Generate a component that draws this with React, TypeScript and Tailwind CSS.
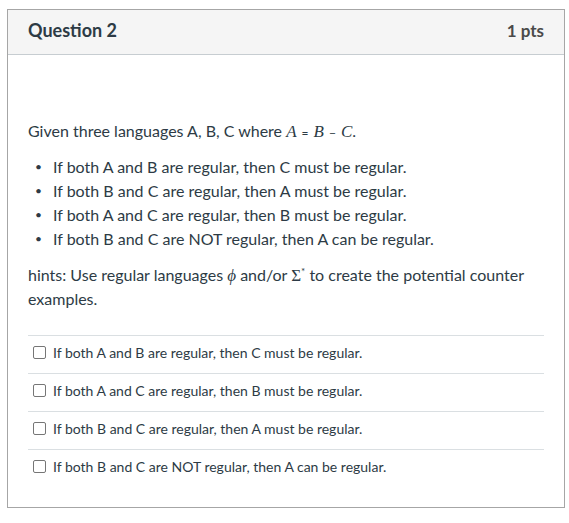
const BULLETS = [
  "If both A and B are regular, then C must be regular.",
  "If both B and C are regular, then A must be regular.",
  "If both A and C are regular, then B must be regular.",
  "If both B and C are NOT regular, then A can be regular.",
];

const ANSWERS = [
  "If both A and B are regular, then C must be regular.",
  "If both A and C are regular, then B must be regular.",
  "If both B and C are regular, then A must be regular.",
  "If both B and C are NOT regular, then A can be regular.",
];

const math = "font-['Liberation_Serif','DejaVu_Serif',serif] italic text-[17px] leading-none";

export default function App() {
  return (
    <div className="min-h-screen bg-white pt-[9px] pl-[7px] font-['Lato','Noto_Sans',sans-serif] text-[#2d3b45]">
      <div className="w-[558px] border border-[#a6a6a6]">
        <div className="flex items-center justify-between h-[45px] px-5 pb-[3px] bg-[#f5f5f5] border-b border-[#c7cdd1]">
          <h2 className="text-[18px] font-bold">Question 2</h2>
          <span className="text-[17px] font-bold text-[#4a4a4a]">1 pts</span>
        </div>

        <div className="px-5 pt-[64px] pb-5">
          <p className="text-[16px] leading-6 h-6">
            Given three languages A, B, C where{" "}
            <span className={math}>A</span>
            <span className="mx-[5px] text-[12px] leading-none">=</span>
            <span className={math}>B</span>
            <span className="mx-[5px] text-[12px] leading-none">−</span>
            <span className={math}>C</span>.
          </p>

          <ul className="mt-3 text-[16px] leading-6">
            {BULLETS.map((b) => (
              <li key={b} className="flex h-6">
                <span className="w-[25px] shrink-0 pl-[7px] text-[12px]">•</span>
                <span>{b}</span>
              </li>
            ))}
          </ul>

          <p className="mt-3 text-[16px] leading-6">
            hints: Use regular languages <span className={math}>ϕ</span> and/or{" "}
            <span className="font-['Liberation_Serif','DejaVu_Serif',serif] text-[17px] leading-none">Σ</span>
            <span className="inline-block -translate-y-[6px] text-[10px] leading-none">*</span>{" "}
            to create the potential counter examples.
          </p>

          <div className="mt-[24px]">
            {ANSWERS.map((a) => (
              <label
                key={a}
                className="flex items-center gap-[7px] h-[38px] pb-[4px] pl-[5px] border-t border-[#dadfe2] text-[14px]"
              >
                <span className="w-[13px] h-[13px] rounded-[2px] border border-[#767676] bg-white" />
                <span>{a}</span>
              </label>
            ))}
          </div>
        </div>
      </div>
    </div>
  );
}
